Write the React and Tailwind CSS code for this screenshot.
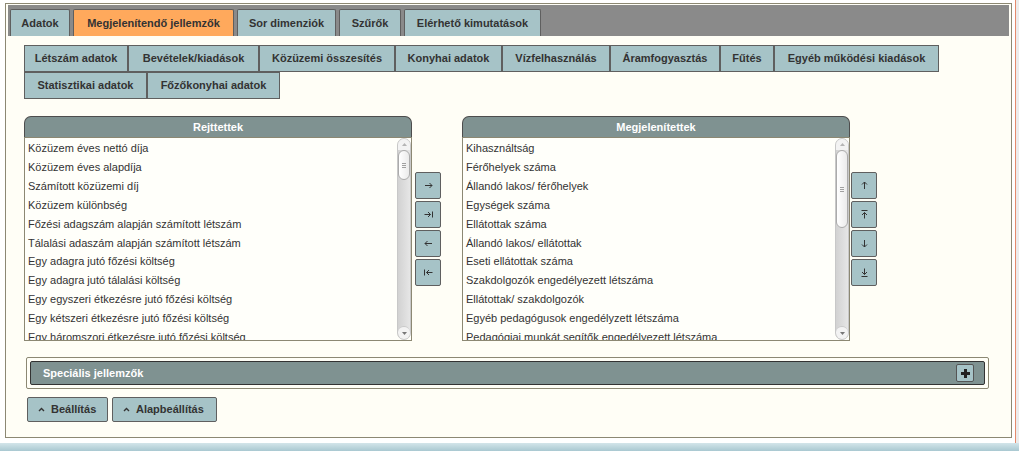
import React from 'react';

const mainTabs = [
  { label: 'Adatok', w: 'w-[60px]' },
  { label: 'Megjelenítendő jellemzők', w: 'w-[161px]', active: true },
  { label: 'Sor dimenziók', w: 'w-[99px]' },
  { label: 'Szűrők', w: 'w-[62px]' },
  { label: 'Elérhető kimutatások', w: 'w-[137px]' },
];

const groups = [
  { label: 'Létszám adatok', w: 'w-[104px]' },
  { label: 'Bevételek/kiadások', w: 'w-[131px]' },
  { label: 'Közüzemi összesítés', w: 'w-[136px]' },
  { label: 'Konyhai adatok', w: 'w-[107px]' },
  { label: 'Vízfelhasználás', w: 'w-[108px]' },
  { label: 'Áramfogyasztás', w: 'w-[110px]' },
  { label: 'Fűtés', w: 'w-[54px]' },
  { label: 'Egyéb működési kiadások', w: 'w-[165px]' },
  { label: 'Statisztikai adatok', w: 'w-[123px]' },
  { label: 'Főzőkonyhai adatok', w: 'w-[133px]' },
];

const hiddenItems = [
  'Közüzem éves nettó díja',
  'Közüzem éves alapdíja',
  'Számított közüzemi díj',
  'Közüzem különbség',
  'Főzési adagszám alapján számított létszám',
  'Tálalási adaszám alapján számított létszám',
  'Egy adagra jutó főzési költség',
  'Egy adagra jutó tálalási költség',
  'Egy egyszeri étkezésre jutó főzési költség',
  'Egy kétszeri étkezésre jutó főzési költség',
  'Egy háromszori étkezésre jutó főzési költség',
];

const shownItems = [
  'Kihasználtság',
  'Férőhelyek száma',
  'Állandó lakos/ férőhelyek',
  'Egységek száma',
  'Ellátottak száma',
  'Állandó lakos/ ellátottak',
  'Eseti ellátottak száma',
  'Szakdolgozók engedélyezett létszáma',
  'Ellátottak/ szakdolgozók',
  'Egyéb pedagógusok engedélyzett létszáma',
  'Pedagógiai munkát segítők engedélyezett létszáma',
];

// small arrow glyphs for the move buttons
const Arrow = ({ kind }) => {
  const paths = {
    right: 'M1 4.5H8M5.5 2L8 4.5L5.5 7',
    rightEnd: 'M0.5 4.5H6.5M4 2L6.5 4.5L4 7M8.5 1.5V7.5',
    left: 'M8 4.5H1M3.5 2L1 4.5L3.5 7',
    leftEnd: 'M8.5 4.5H2.5M5 2L2.5 4.5L5 7M0.5 1.5V7.5',
    up: 'M4.5 8V1M2 3.5L4.5 1L7 3.5',
    top: 'M1.5 0.5H7.5M4.5 8.5V2.5M2 5L4.5 2.5L7 5',
    down: 'M4.5 1V8M2 5.5L4.5 8L7 5.5',
    bottom: 'M1.5 8.5H7.5M4.5 0.5V6.5M2 4L4.5 6.5L7 4',
  };
  return (
    <svg width="9" height="9" viewBox="0 0 9 9" fill="none" stroke="#333" strokeWidth="1">
      <path d={paths[kind]} />
    </svg>
  );
};

const Caret = () => (
  <svg width="7" height="5" viewBox="0 0 7 5" fill="none" stroke="#333" strokeWidth="1.4">
    <path d="M1 4L3.5 1.5L6 4" />
  </svg>
);

function Scrollbar({ thumb }) {
  return (
    <div className="w-[14px] h-full flex flex-col rounded-[7px] border border-[#c8c8c8] bg-gradient-to-r from-[#d2d2d2] to-[#e6e6e6] overflow-hidden">
      <div className="h-[11px] flex items-center justify-center bg-[#f3f3f3]">
        <svg width="5" height="3" viewBox="0 0 5 3"><path d="M0 3L2.5 0L5 3Z" fill="#b5b5b5" /></svg>
      </div>
      <div className={`${thumb} rounded-[7px] border border-[#ababab] bg-gradient-to-r from-white to-[#ebebeb] flex flex-col items-center justify-center gap-[1px]`}>
        <div className="w-[4px] h-px bg-[#a0a0a0]" />
        <div className="w-[4px] h-px bg-[#a0a0a0]" />
        <div className="w-[4px] h-px bg-[#a0a0a0]" />
      </div>
      <div className="flex-1" />
      <div className="h-[13px] flex items-center justify-center bg-[#f3f3f3] rounded-[7px] border-t border-[#c8c8c8]">
        <svg width="5" height="3" viewBox="0 0 5 3"><path d="M0 0L2.5 3L5 0Z" fill="#777" /></svg>
      </div>
    </div>
  );
}

function ListPanel({ title, items, thumb }) {
  return (
    <div className="w-[388px] flex flex-col">
      <div className="h-[21px] rounded-t-[7px] border border-b-0 border-[#4d4d4d] bg-[#7f9291] flex items-center justify-center text-white font-bold text-[11px]">
        {title}
      </div>
      <div className="h-[204px] border border-[#8c8873] bg-[#fffffa] flex">
        <ul className="flex-1 overflow-hidden pl-[3px] pt-[1px] text-[11px] leading-[18.9px] text-[#333]">
          {items.map(item => (
            <li key={item} className="whitespace-nowrap">{item}</li>
          ))}
        </ul>
        <Scrollbar thumb={thumb} />
      </div>
    </div>
  );
}

function MoveButtons({ kinds }) {
  return (
    <div className="mt-[56px] flex flex-col gap-[2px]">
      {kinds.map(kind => (
        <button
          key={kind}
          className="w-[26px] h-[27px] bg-[#a6c3c7] border border-[#5f5f5f] rounded-[2px] flex items-center justify-center"
        >
          <Arrow kind={kind} />
        </button>
      ))}
    </div>
  );
}

export default function App() {
  return (
    <div className="w-[1019px] h-[451px] bg-white flex flex-col font-['Liberation_Sans',Arial,sans-serif] overflow-hidden">
      <div className="h-[443px] flex">
        <div className="w-[1015px] pl-[5px] pt-[3px]">
          <div className="w-[1007px] h-[435px] border border-[#8c8873] bg-[#fffef6] flex flex-col">
            {/* main tab strip */}
            <div className="mx-[2px] mt-[1px] h-[31px] bg-[#8a8a8a] flex items-end gap-[3px] pl-[2px]">
              {mainTabs.map(tab => (
                <div
                  key={tab.label}
                  className={`${tab.w} h-[27px] border border-b-0 border-[#5f5f5f] rounded-t-[2px] flex items-center justify-center text-[11px] font-bold text-[#333] ${tab.active ? 'bg-[#ffa95c]' : 'bg-[#a6c3c7]'}`}
                >
                  {tab.label}
                </div>
              ))}
            </div>

            {/* group buttons */}
            <div className="mt-[9px] ml-[18px] w-[960px] flex flex-wrap">
              {groups.map(g => (
                <div
                  key={g.label}
                  className={`${g.w} h-[27px] border border-[#5f5f5f] bg-[#a6c3c7] flex items-center justify-center text-[11px] font-bold text-[#333]`}
                >
                  {g.label}
                </div>
              ))}
            </div>

            {/* lists */}
            <div className="mt-[17px] ml-[18px] flex items-start">
              <ListPanel title="Rejttettek" items={hiddenItems} thumb="h-[30px]" />
              <div className="ml-[3px]">
                <MoveButtons kinds={['right', 'rightEnd', 'left', 'leftEnd']} />
              </div>
              <div className="ml-[21px]">
                <ListPanel title="Megjelenítettek" items={shownItems} thumb="h-[78px]" />
              </div>
              <div className="ml-[1px]">
                <MoveButtons kinds={['up', 'top', 'down', 'bottom']} />
              </div>
            </div>

            {/* special features */}
            <div className="mt-[16px] ml-[20px] w-[963px] h-[32px] border border-[#8c8873] rounded-[2px] p-[3px]">
              <div className="h-full bg-[#7f9291] border border-[#333] rounded-[2px] flex items-center justify-between pl-[12px] pr-[10px]">
                <span className="text-white font-bold text-[11px]">Speciális jellemzők</span>
                <button className="w-[18px] h-[18px] bg-[#a6c3c7] border border-[#555] rounded-[2px] flex items-center justify-center">
                  <svg width="9" height="9" viewBox="0 0 9 9"><path d="M3 0H6V3H9V6H6V9H3V6H0V3H3Z" fill="#222" /></svg>
                </button>
              </div>
            </div>

            {/* bottom actions */}
            <div className="mt-[8px] ml-[21px] flex gap-[4px]">
              <button className="w-[81px] h-[25px] bg-[#a6c3c7] border border-[#5f5f5f] rounded-[2px] flex items-center pl-[10px] gap-[6px] text-[11px] font-bold text-[#333]">
                <Caret />
                Beállítás
              </button>
              <button className="w-[105px] h-[25px] bg-[#a6c3c7] border border-[#5f5f5f] rounded-[2px] flex items-center pl-[10px] gap-[6px] text-[11px] font-bold text-[#333]">
                <Caret />
                Alapbeállítás
              </button>
            </div>
          </div>
        </div>
        <div className="w-px bg-[#e58a6c]" />
        <div className="flex-1 bg-[#ececec]" />
      </div>
      <div className="h-[8px] bg-gradient-to-b from-[#d3e5ea] to-[#a9c8d1]" />
    </div>
  );
}
